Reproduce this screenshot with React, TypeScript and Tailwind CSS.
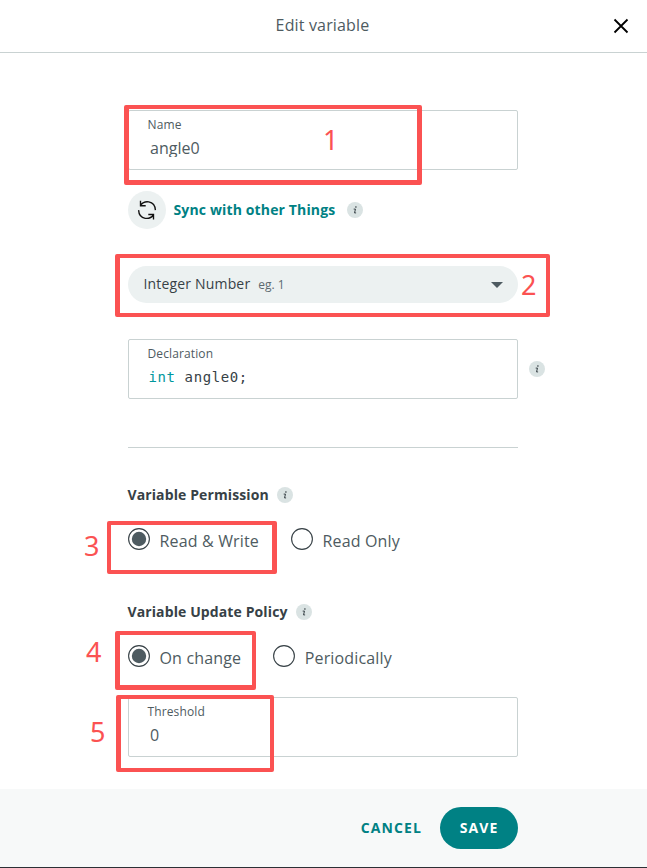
import type { ReactNode } from "react";

function Info() {
  return (
    <span className="flex size-4 shrink-0 items-center justify-center rounded-full bg-[#dae3e3]">
      <svg viewBox="0 0 16 16" className="size-4" fill="none" stroke="#374146">
        <path d="M8.3 5h1.2" strokeWidth="1.5" />
        <path d="M6.7 7.1h1.8L7.5 10.9h1.6" strokeWidth="1" />
      </svg>
    </span>
  );
}

function Field({ label, children }: { label: string; children: ReactNode }) {
  return (
    <div className="h-[60px] w-[390px] rounded-[2px] border border-[#c9d2d2] pt-[6px] pl-[18.5px]">
      <div className="h-4 text-[12px] leading-4 tracking-[0.12px] text-[#4e5b61]">{label}</div>
      {children}
    </div>
  );
}

function Radio({ label, checked = false }: { label: string; checked?: boolean }) {
  return (
    <label className="flex h-[22px] items-center gap-[9.5px]">
      <svg viewBox="0 0 22 22" className="size-[22px] shrink-0">
        <circle cx="11" cy="11" r="10.4" fill="white" stroke="#374146" strokeWidth="1.1" />
        {checked && <circle cx="11" cy="11" r="7.2" fill="#4e5b61" />}
      </svg>
      <span className="relative top-[2px] text-[16px] leading-[22px] tracking-[0.16px] whitespace-nowrap text-[#4e5b61]">{label}</span>
    </label>
  );
}

function Mark({ n, box, digit }: { n: number; box: string; digit: string }) {
  return (
    <>
      <div className={"pointer-events-none absolute rounded-[2px] border-[#fb5252] " + box} />
      <span className={"absolute font-['Noto_Sans',sans-serif] text-[27px] leading-7 text-[#fb5252] " + digit}>{n}</span>
    </>
  );
}

export default function App() {
  return (
    <div className="relative flex h-[868px] w-[647px] flex-col overflow-hidden bg-white font-['Open_Sans',sans-serif] text-[#374146]">
      <header className="flex h-[53px] shrink-0 items-center border-b border-[#c9d2d2] pr-[18px] pl-8">
        <h1 className="flex-1 pb-[2px] text-center text-[16px] leading-6 tracking-[0.16px] text-[#4e5b61]">Edit variable</h1>
        <svg viewBox="0 0 16 16" className="size-4" fill="none" stroke="#000" strokeWidth="1.8">
          <path d="M1.5 1.5l13 13M14.5 1.5l-13 13" />
        </svg>
      </header>

      <main className="flex h-[736px] shrink-0 flex-col pt-[57px] pl-32">
        <Field label="Name">
          <div className="mt-[4px] h-[20px] overflow-hidden pl-[2.5px] text-[16px] leading-[22px] text-[#4e5b61]">angle0</div>
        </Field>

        <div className="mt-[21px] flex h-[38px] items-center">
          <span className="flex size-[38px] items-center justify-center rounded-full bg-[#ecf1f1]">
            <svg viewBox="0 0 20 20" className="size-5" fill="none" stroke="#111" strokeWidth="1.35">
              <path d="M3.5 0.8v4.9h5.2M3.7 5.2C5.5 2.6 8.6 1.4 11.8 1.9c3.7 0.7 6.4 4 6.6 8.2" />
              <path d="M16.5 19.4v-4.9h-5.2M16.3 15C14.5 17.6 11.4 18.8 8.2 18.3 4.5 17.6 1.8 14.3 1.6 10.1" />
            </svg>
          </span>
          <span className="ml-[7.5px] w-[173.5px] text-[14px] leading-5 font-bold tracking-[0.14px] whitespace-nowrap text-[#008184]">Sync with other Things</span>
          <Info />
        </div>

        <div className="mt-[37px] flex h-[37px] w-[390px] items-center rounded-full bg-[#ecf1f1] pr-[15px] pl-[15.5px]">
          <span className="pb-px text-[14px] leading-5 tracking-[0.17px]">Integer Number</span>
          <span className="ml-2 text-[12px] leading-5 text-[#5d6a70]">eg. 1</span>
          <svg viewBox="0 0 12 6" className="ml-auto h-[6px] w-3">
            <path d="M0 0h12L6 6z" fill="#4e5b61" />
          </svg>
        </div>

        <div className="mt-9 flex items-center gap-[11px]">
          <Field label="Declaration">
            <div className="mt-[5px] h-5 pl-[1px] font-['DejaVu_Sans_Mono',monospace] text-[14px] leading-[21px] tracking-[0.6px]">
              <span className="text-[#00979d]">int</span> angle0;
            </div>
          </Field>
          <Info />
        </div>

        <div className="mt-12 h-px w-[390px] bg-[#c9d2d2]" />

        <div className="mt-[37px] -ml-[0.5px] flex h-5 items-center gap-2 text-[14px] leading-5 font-bold tracking-[0.11px]">
          <span>Variable Permission</span>
          <Info />
        </div>
        <div className="mt-[23px] flex gap-8">
          <Radio label="Read & Write" checked />
          <Radio label="Read Only" />
        </div>

        <div className="mt-[52px] -ml-[0.5px] flex h-5 items-center gap-2 text-[14px] leading-5 font-bold tracking-[0.11px]">
          <span>Variable Update Policy</span>
          <Info />
        </div>
        <div className="mt-[23px] mb-[30px] flex gap-8">
          <Radio label="On change" checked />
          <Radio label="Periodically" />
        </div>

        <Field label="Threshold">
          <div className="mt-[4px] h-[22px] pl-[2.5px] text-[16px] leading-[22px] text-[#4e5b61]">0</div>
        </Field>
      </main>

      <footer className="flex h-[79px] shrink-0 items-center justify-end border-b border-[#2c3035] bg-[#f7f9f9] pr-[129px] text-[14px] font-bold">
        <button className="mr-[18px] pb-[2px] tracking-[1.1px] text-[#008184]">CANCEL</button>
        <button className="h-[42px] w-[78px] rounded-full bg-[#008184] pb-[2px] tracking-[1.1px] text-white">SAVE</button>
      </footer>

      <Mark n={1} box="left-[124px] top-[105px] h-[80px] w-[298px] border-x-[5px] border-t-4 border-b-5" digit="left-[323px] top-[126px]" />
      <Mark n={2} box="left-[115px] top-[254px] h-[63px] w-[435px] border-4 border-l-5" digit="left-[521px] top-[271px]" />
      <Mark n={3} box="left-[107px] top-[521px] h-[53px] w-[170px] border-4 border-r-5" digit="left-[84px] top-[532px]" />
      <Mark n={4} box="left-[115px] top-[631px] h-[59px] w-[141px] border-4 border-l-5 border-b-5" digit="left-[86px] top-[638px]" />
      <Mark n={5} box="left-[116px] top-[695px] h-[77px] w-[158px] border-4 border-l-5" digit="left-[90px] top-[718px]" />
    </div>
  );
}
